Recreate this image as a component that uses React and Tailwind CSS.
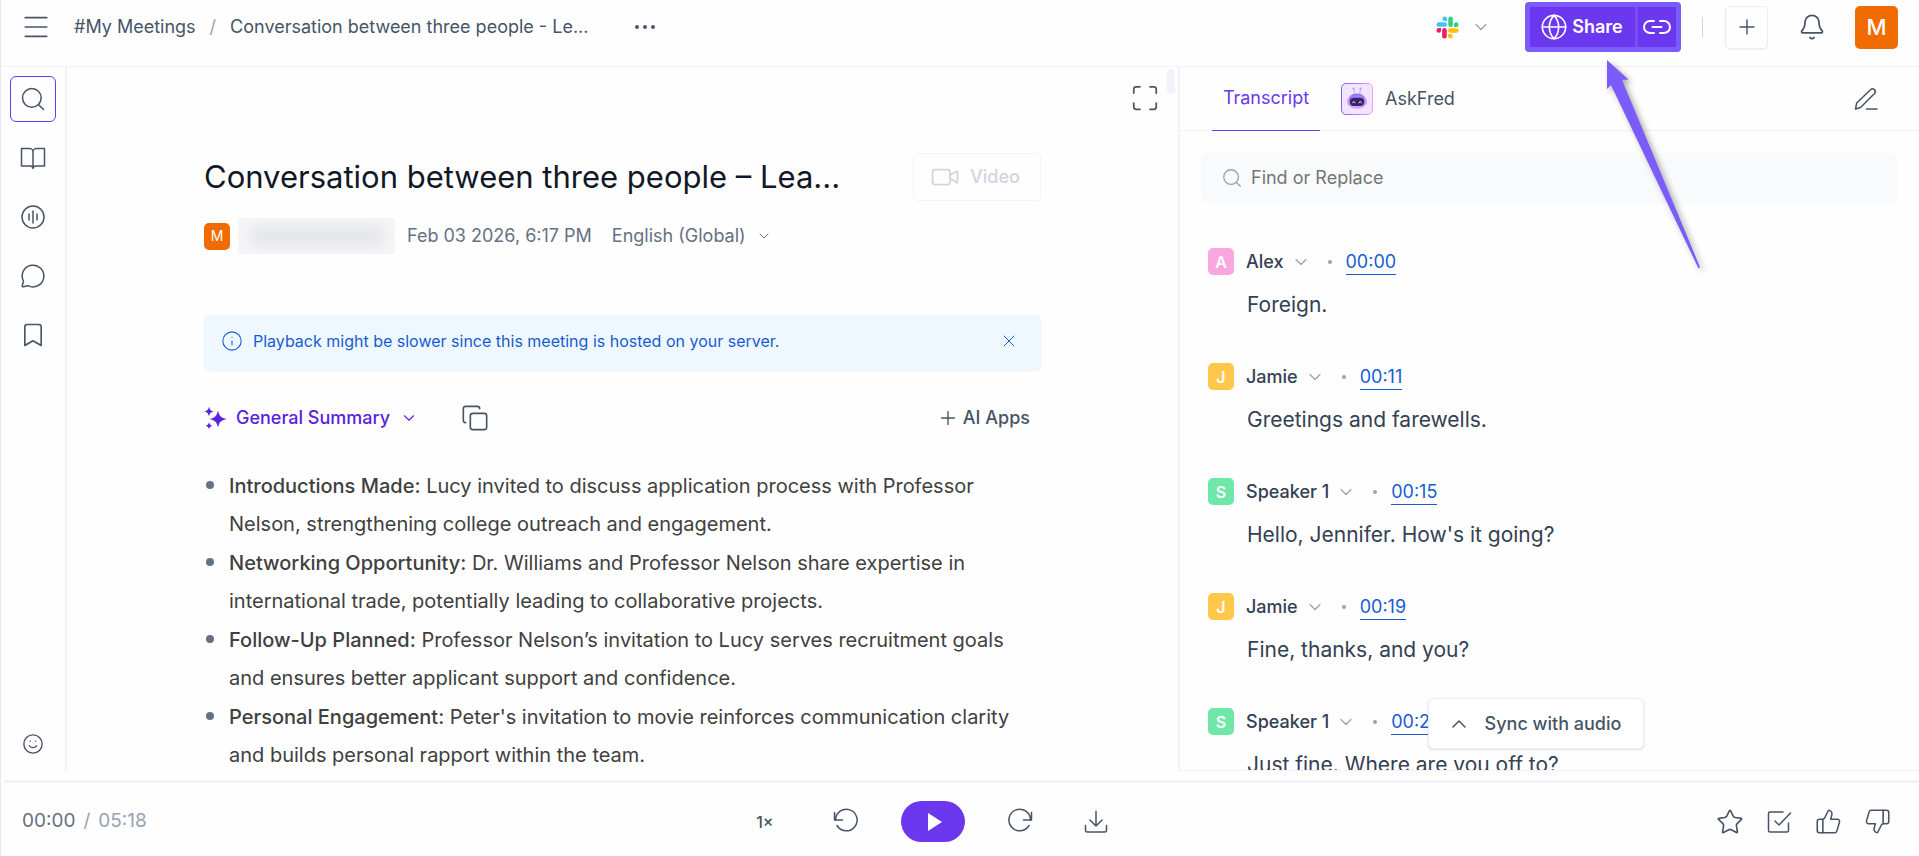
import React, { useState } from "react";
import {
  Bell,
  Bookmark,
  ChevronDown,
  ChevronUp,
  Copy,
  Globe,
  Info,
  Maximize,
  Menu,
  MessageCircle,
  Plus,
  Search,
  Smile,
  Star,
  ThumbsDown,
  ThumbsUp,
  Video,
  X,
} from "lucide-react";

const summary = [
  {
    title: "Introductions Made:",
    text: "Lucy invited to discuss application process with Professor Nelson, strengthening college outreach and engagement.",
  },
  {
    title: "Networking Opportunity:",
    text: "Dr. Williams and Professor Nelson share expertise in international trade, potentially leading to collaborative projects.",
  },
  {
    title: "Follow-Up Planned:",
    text: "Professor Nelson’s invitation to Lucy serves recruitment goals and ensures better applicant support and confidence.",
  },
  {
    title: "Personal Engagement:",
    text: "Peter's invitation to movie reinforces communication clarity and builds personal rapport within the team.",
  },
];

const transcript = [
  { name: "Alex", time: "00:00", text: "Foreign.", color: "bg-[#faa7e0]" },
  { name: "Jamie", time: "00:11", text: "Greetings and farewells.", color: "bg-[#ffc84a]" },
  { name: "Speaker 1", time: "00:15", text: "Hello, Jennifer. How's it going?", color: "bg-[#6ee7a8]" },
  { name: "Jamie", time: "00:19", text: "Fine, thanks, and you?", color: "bg-[#ffc84a]" },
  { name: "Speaker 1", time: "00:21", text: "Just fine. Where are you off to?", color: "bg-[#6ee7a8]" },
];

const SlackIcon = () => (
  <svg viewBox="0 0 24 24" className="w-[23px] h-[23px]">
    <g fill="#3fc3fa">
      <path d="M9 0.5a2.4 2.4 0 0 0 0 4.8h2.4V2.9A2.4 2.4 0 0 0 9 .5z" />
      <rect x="0.5" y="6.4" width="11" height="4.8" rx="2.4" />
    </g>
    <g fill="#2fd17b">
      <path d="M23.5 9a2.4 2.4 0 0 0-4.8 0v2.4h2.4A2.4 2.4 0 0 0 23.5 9z" />
      <rect x="12.8" y="0.5" width="4.8" height="11" rx="2.4" />
    </g>
    <g fill="#ffc107">
      <path d="M15 23.5a2.4 2.4 0 0 0 0-4.8h-2.4v2.4a2.4 2.4 0 0 0 2.4 2.4z" />
      <rect x="12.6" y="12.8" width="11" height="4.8" rx="2.4" />
    </g>
    <g fill="#e91e63">
      <path d="M0.5 15a2.4 2.4 0 0 0 4.8 0v-2.4H2.9A2.4 2.4 0 0 0 .5 15z" />
      <rect x="6.4" y="12.6" width="4.8" height="11" rx="2.4" />
    </g>
  </svg>
);

const LinkIcon = () => (
  <svg viewBox="0 0 28 16" fill="none" stroke="currentColor" strokeWidth="2" strokeLinecap="round" className="w-7 h-4">
    <path d="M11 2H7a6 6 0 0 0 0 12h4M17 2h4a6 6 0 0 1 0 12h-4M9.5 8h9" />
  </svg>
);

// Shared wrapper for the line icons drawn on a 24px grid
const LineIcon = ({ children }) => (
  <svg
    viewBox="0 0 24 24"
    fill="none"
    stroke="currentColor"
    strokeWidth="1.5"
    strokeLinecap="round"
    strokeLinejoin="round"
    className="w-6 h-6 overflow-visible"
  >
    {children}
  </svg>
);

const BookIcon = () => (
  <LineIcon>
    <path d="M12 5.5C12 4 10.5 2.500 8.500 2.500H0.500V20H9c1.700 0 3 .8 3 2.500 0-1.700 1.300-2.500 3-2.500h8.500V2.500h-8C13.500 2.500 12 4 12 5.500zM12 5.500V22" />
  </LineIcon>
);

const WaveIcon = () => (
  <LineIcon>
    <circle cx="12" cy="12" r="11" />
    <path d="M8 9v6M12 6v12M16 9v6" />
  </LineIcon>
);

const PencilIcon = () => (
  <LineIcon>
    <path d="M1.500 22l1.200-6L16.500 2.700a2.700 2.700 0 0 1 4 3.800L6.500 20.500z" />
    <path d="M12.500 22h10.500" />
  </LineIcon>
);

const TaskIcon = () => (
  <LineIcon>
    <path d="M16 2H3a1.500 1.500 0 0 0-1.500 1.500v17A1.500 1.500 0 0 0 3 22h17a1.500 1.500 0 0 0 1.500-1.500V13" />
    <path d="M8 11l4 4L23.500 3" />
  </LineIcon>
);

const RewindIcon = () => (
  <LineIcon>
    <path d="M0.500 2.500V10H8.500" />
    <path d="M1.500 10A10.800 10.800 0 1 1 3 15.500" />
  </LineIcon>
);

const ForwardIcon = () => (
  <LineIcon>
    <path d="M23.500 2.500V10H15.500" />
    <path d="M22.500 10A10.800 10.800 0 1 0 21 15.500" />
  </LineIcon>
);

const DownloadIcon = () => (
  <LineIcon>
    <path d="M12 1.500v14.500M6 10l6 6 6-6" />
    <path d="M1.500 15.500v5A1.500 1.500 0 0 0 3 22h18a1.500 1.500 0 0 0 1.500-1.500v-5" />
  </LineIcon>
);

const SparkleIcon = () => (
  <svg viewBox="0 0 24 24" fill="#5b21e0" className="w-6 h-6">
    <path d="M14 4.500c1.200 5.200 2.700 7.300 9 8.500-6.300 1.300-7.800 3.300-9 8.500-1.200-5.200-2.700-7.200-8.500-8.500 5.800-1.200 7.300-3.300 8.500-8.500z" />
    <path d="M5 0.500c.6 3.200 1.700 4.500 5 5-3.300.6-4.400 1.800-5 5-.6-3.200-1.700-4.400-5-5 3.300-.5 4.400-1.800 5-5z" />
    <path d="M5 16c.4 2.300 1.300 3.300 3.500 3.800-2.200.4-3.100 1.400-3.500 3.700-.4-2.300-1.300-3.300-3.500-3.700C3.700 19.300 4.600 18.300 5 16z" />
  </svg>
);

const FredIcon = () => (
  <svg viewBox="0 0 32 32" className="w-8 h-8">
    <defs>
      <linearGradient id="fred-border" x1="0" x2="1">
        <stop offset="0" stopColor="#7c5cf6" />
        <stop offset="1" stopColor="#f0a0fb" />
      </linearGradient>
      <linearGradient id="fred-head" x1="0" y1="0" x2="0" y2="1">
        <stop offset="0" stopColor="#8b74f7" />
        <stop offset="1" stopColor="#e5a8fb" />
      </linearGradient>
    </defs>
    <rect x="0.5" y="0.5" width="31" height="31" rx="4.5" fill="#f1e5fe" stroke="url(#fred-border)" />
    <path d="M13.500 11l-.8-5.500M18.700 11l.8-5.500" stroke="#c9a2f3" strokeWidth="1" fill="none" />
    <circle cx="12.5" cy="5.6" r="1" fill="#b48af0" />
    <circle cx="19.5" cy="5.6" r="1" fill="#b48af0" />
    <rect x="6" y="15" width="20" height="8" rx="4" fill="#d9a5fb" />
    <path d="M16 10.500c5.500 0 9 3 9 8s-3.500 7.300-9 7.300-9-2.300-9-7.300 3.500-8 9-8z" fill="url(#fred-head)" />
    <rect x="8.8" y="14.8" width="14.4" height="8.2" rx="4.1" fill="#3a2467" />
    <path d="M11.500 19.500q1.300-2 2.600 0M17.900 19.500q1.300-2 2.600 0" stroke="#fff" strokeWidth="1" fill="none" strokeLinecap="round" />
  </svg>
);

const ShareArrow = () => (
  <svg
    viewBox="0 0 116 220"
    className="absolute left-[70px] top-[51px] z-20 w-[116px] h-[220px] pointer-events-none drop-shadow-[3px_3px_3px_rgba(0,0,0,0.35)]"
  >
    <path d="M7 2L28.500 21.500L22 22L100 209L98.500 210.500L11 27L7 31Z" fill="#7b5cfa" />
  </svg>
);

const IconButton = ({ label, children }) => (
  <button aria-label={label} className="flex items-center justify-center w-[42px] h-[42px] shrink-0">
    {children}
  </button>
);

const TopBar = () => (
  <header className="flex items-center justify-between h-[67px] pb-3 pl-[14px] pr-[21px] border-b border-[#f2f2f7]">
    <div className="flex items-center text-lg">
      <IconButton label="Menu">
        <Menu size={32} strokeWidth={1.3} />
      </IconButton>
      <nav aria-label="Breadcrumb" className="flex items-center ml-[17px] gap-[14px]">
        <a href="#meetings">#My Meetings</a>
        <span className="text-[#98a2b3]">/</span>
        <a href="#conversation">Conversation between three people - Le...</a>
      </nav>
      <button aria-label="More options" className="flex items-center justify-center gap-1 w-[42px] h-[42px] ml-9">
        <span className="w-1 h-1 rounded-full bg-[#475467]" />
        <span className="w-1 h-1 rounded-full bg-[#475467]" />
        <span className="w-1 h-1 rounded-full bg-[#475467]" />
      </button>
    </div>

    <div className="flex items-center">
      <button aria-label="Slack" className="flex items-center gap-3">
        <SlackIcon />
        <ChevronDown size={20} strokeWidth={1.5} className="text-[#98a2b3]" />
      </button>
      <div className="relative flex w-[156px] h-[50px] ml-[34px] rounded-[4px] border-[5px] border-[#7b5cfa] bg-[#6b38ef] text-white">
        <button className="flex items-center justify-center gap-1 flex-1 pr-0.5 text-lg font-semibold">
          <Globe size={28} strokeWidth={1.4} />
          Share
        </button>
        <button aria-label="Copy link" className="flex items-center justify-center w-[41px] border-l-[3px] border-[#7b4df0]">
          <LinkIcon />
        </button>
        <ShareArrow />
      </div>
      <span className="w-px h-5 ml-[21px] mr-[22px] bg-[#d0d5dd]" />
      <button
        aria-label="New"
        className="flex items-center justify-center w-[43px] h-[43px] rounded-[5px] border border-[#eaecf0] shadow-xs"
      >
        <Plus size={24} strokeWidth={1.4} />
      </button>
      <button aria-label="Notifications" className="flex items-center justify-center w-[43px] h-[43px] mx-[22px]">
        <Bell size={28} strokeWidth={1.5} />
      </button>
      <button className="w-[43px] h-[43px] rounded-[5px] bg-[#f06c00] text-white text-[22px] font-medium">M</button>
    </div>
  </header>
);

const Sidebar = () => (
  <aside className="flex flex-col items-center justify-between w-[66px] shrink-0 pt-[9px] pb-[6px] pr-px border-r-2 border-[#f2f2f8]">
    <div className="flex flex-col gap-[13px]">
      <button
        aria-label="Search"
        className="flex items-center justify-center w-[46px] h-[46px] rounded-[6px] border border-[#6b38ef]"
      >
        <Search size={28} strokeWidth={1.3} />
      </button>
      <button aria-label="Library" className="flex items-center justify-center w-[46px] h-[46px]">
        <BookIcon />
      </button>
      <button aria-label="Soundbites" className="flex items-center justify-center w-[46px] h-[46px]">
        <WaveIcon />
      </button>
      <button aria-label="Comments" className="flex items-center justify-center w-[46px] h-[46px]">
        <MessageCircle size={26} strokeWidth={1.4} />
      </button>
      <button aria-label="Bookmarks" className="flex items-center justify-center w-[46px] h-[46px]">
        <Bookmark size={28} strokeWidth={1.4} />
      </button>
    </div>
    <IconButton label="Feedback">
      <Smile size={22} strokeWidth={1.5} />
    </IconButton>
  </aside>
);

const SummaryPanel = () => {
  const [showNotice, setShowNotice] = useState(true);

  return (
    <main className="relative flex-1 min-w-0 overflow-hidden">
      <button aria-label="Full screen" className="absolute right-3 top-[10px] flex items-center justify-center w-[42px] h-[42px]">
        <Maximize size={30} strokeWidth={1.4} />
      </button>
      <div className="absolute right-[3px] top-[2px] w-2 h-[25px] rounded-full bg-[#f2f2f8]" />

      <div className="w-full max-w-[837px] mx-auto pt-[86px]">
        <div className="flex items-center justify-between h-12">
          <h1 className="text-[31px] leading-10 text-[#101828]">Conversation between three people – Lea...</h1>
          <button
            disabled
            className="flex items-center justify-center gap-[10px] w-32 h-12 pr-1 rounded-[5px] border border-[#f2f4f7] text-lg font-medium text-[#d0d5dd]"
          >
            <Video size={30} strokeWidth={1.4} />
            Video
          </button>
        </div>

        {/* Meeting details */}
        <div className="flex items-center h-9 mt-[17px] text-lg text-[#667085]">
          <span className="flex items-center justify-center w-[26px] h-[27px] rounded-[5px] bg-[#f06c00] text-white text-sm">M</span>
          <span className="flex items-center justify-center w-[157px] h-9 ml-2 overflow-hidden bg-[#f6f6f8]">
            <span className="w-[132px] h-4 bg-[#dfe0e5] blur-[8px]" />
          </span>
          <span className="ml-3">Feb 03 2026, 6:17 PM</span>
          <button className="flex items-center gap-[10px] ml-5">
            English (Global)
            <ChevronDown size={16} strokeWidth={1.5} />
          </button>
        </div>

        {showNotice && (
          <div className="flex items-center h-[55px] mt-[61px] pb-1 pl-[17px] pr-[22px] rounded-[5px] bg-[#eff8ff] text-base text-[#175cd3] shadow-xs">
            <Info size={22} strokeWidth={1.2} />
            <span className="flex-1 ml-[10px]">Playback might be slower since this meeting is hosted on your server.</span>
            <button aria-label="Dismiss" onClick={() => setShowNotice(false)}>
              <X size={20} strokeWidth={1.2} />
            </button>
          </div>
        )}

        <div className="flex items-center justify-between h-[42px] mt-[27px]">
          <div className="flex items-center">
            <button className="flex items-center gap-2 text-lg font-medium text-[#5b21e0]">
              <SparkleIcon />
              General Summary
              <ChevronDown size={18} strokeWidth={1.5} className="ml-0.5" />
            </button>
            <button aria-label="Copy summary" className="flex items-center justify-center w-[42px] h-[42px] ml-9">
              <Copy size={28} strokeWidth={1.4} />
            </button>
          </div>
          <button className="flex items-center gap-1 pr-[11px] text-lg font-medium">
            <Plus size={22} strokeWidth={1.5} />
            AI Apps
          </button>
        </div>

        <ul className="flex flex-col gap-px mt-7 text-xl leading-[38px] text-[#404040]">
          {summary.map((item) => (
            <li key={item.title} className="flex gap-[15px]">
              <span className="w-2 h-2 mt-[14px] ml-0.5 shrink-0 rounded-full bg-[#667085]" />
              <p>
                <span className="font-medium">{item.title}</span> {item.text}
              </p>
            </li>
          ))}
        </ul>
      </div>
    </main>
  );
};

const TranscriptPanel = () => {
  const [query, setQuery] = useState("");

  return (
    <section className="relative flex flex-col w-[741px] shrink-0 overflow-hidden border-l-2 border-b border-[#f2f2f8]">
      <div className="flex items-center justify-between h-16 shrink-0 pl-8 pr-8 border-b border-[#f2f2f7] text-lg">
        <div className="flex items-center h-full">
          <button className="h-16 w-[108px] border-b border-[#6b38ef] text-[#6b38ef]">Transcript</button>
          <button className="flex items-center gap-3 ml-[21px]">
            <FredIcon />
            AskFred
          </button>
        </div>
        <IconButton label="Edit transcript">
          <PencilIcon />
        </IconButton>
      </div>

      <label className="flex items-center gap-2 h-[50px] shrink-0 mt-[22px] mx-[21px] pl-5 rounded-[6px] bg-[#f9fafb]">
        <Search size={22} strokeWidth={1.5} className="text-[#98a2b3]" />
        <input
          type="text"
          aria-label="Find or Replace"
          placeholder="Find or Replace"
          value={query}
          onChange={(e) => setQuery(e.target.value)}
          className="flex-1 text-lg outline-none placeholder:text-[#757575]"
        />
      </label>

      <div className="flex-1 min-h-0 overflow-hidden mt-[45px] pl-7">
        {transcript.map((line, index) => (
          <div key={index} className="h-[115px]">
            <div className="flex items-center h-[27px] text-lg">
              <span
                className={`flex items-center justify-center w-[26px] h-[27px] rounded-[5px] text-white text-base font-semibold ${line.color}`}
              >
                {line.name[0]}
              </span>
              <button className="flex items-center gap-[7px] ml-3 font-medium text-[#344054]">
                {line.name}
                <ChevronDown size={20} strokeWidth={1.5} className="text-[#98a2b3]" />
              </button>
              <span className="w-1 h-1 ml-[17px] mr-[14px] rounded-full bg-[#98a2b3]" />
              <a href={`#t-${line.time}`} className="mt-0.5 border-b border-[#175cd3] leading-6 text-[#175cd3]">
                {line.time}
              </a>
            </div>
            <p className="mt-[15px] ml-[39px] text-[21px] leading-[30px] text-[#344054]">{line.text}</p>
          </div>
        ))}
      </div>

      <button className="absolute left-[248px] bottom-[21px] flex items-center justify-center gap-[14px] w-[216px] h-[51px] pr-1 rounded-[5px] border border-[#eaecf0] bg-white text-lg font-medium shadow-sm">
        <ChevronUp size={24} strokeWidth={1.5} />
        Sync with audio
      </button>
    </section>
  );
};

const Player = () => (
  <footer className="pt-[9px]">
    <div className="h-[3px] ml-[3px] rounded-full bg-[#f2f2f8]" />
    <div className="flex items-center justify-between h-[73px] pt-1 px-[21px]">
      <p className="flex gap-2 text-[19px] text-[#98a2b3]">
        <span className="text-[#667085]">00:00</span>
        <span>/</span>
        <span>05:18</span>
      </p>
      <div className="flex items-center gap-[34px]">
        <button aria-label="Playback speed" className="w-[52px] h-[42px] text-base font-medium">
          1×
        </button>
        <IconButton label="Back">
          <RewindIcon />
        </IconButton>
        <button aria-label="Play" className="flex items-center justify-center w-16 h-[41px] rounded-full bg-[#6b38ef]">
          <svg viewBox="0 0 14 18" className="w-[14px] h-[18px] ml-1" fill="#fff">
            <path d="M0 0l14 9L0 18z" />
          </svg>
        </button>
        <IconButton label="Forward">
          <ForwardIcon />
        </IconButton>
        <IconButton label="Download">
          <DownloadIcon />
        </IconButton>
      </div>
      <div className="flex items-center gap-[7px]">
        <IconButton label="Favorite">
          <Star size={28} strokeWidth={1.4} />
        </IconButton>
        <IconButton label="Create task">
          <TaskIcon />
        </IconButton>
        <IconButton label="Like">
          <ThumbsUp size={27} strokeWidth={1.4} />
        </IconButton>
        <IconButton label="Dislike">
          <ThumbsDown size={27} strokeWidth={1.4} />
        </IconButton>
      </div>
    </div>
  </footer>
);

export default function App() {
  return (
    <div className="flex flex-col h-screen bg-[#fefefe] border-l border-[#e8e8f0] font-['Inter',sans-serif] text-[#475467]">
      <TopBar />
      <div className="flex flex-1 min-h-0">
        <Sidebar />
        <SummaryPanel />
        <TranscriptPanel />
      </div>
      <Player />
    </div>
  );
}
